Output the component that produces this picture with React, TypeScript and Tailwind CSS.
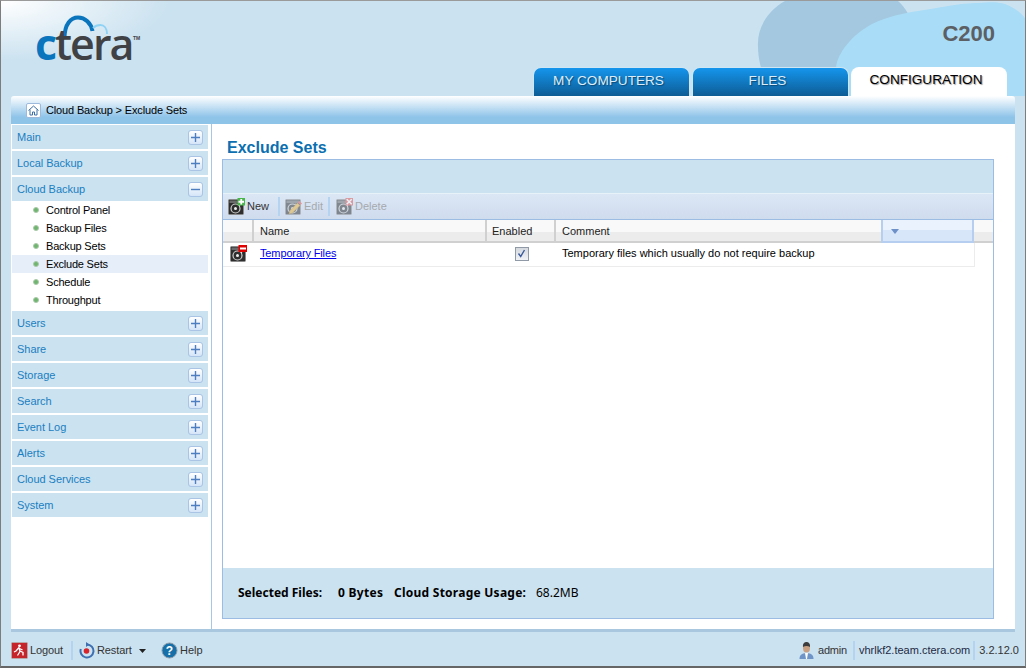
import React from 'react';

const collapsedTop = ['Main', 'Local Backup'];
const cloudItems = ['Control Panel', 'Backup Files', 'Backup Sets', 'Exclude Sets', 'Schedule', 'Throughput'];
const collapsedBottom = ['Users', 'Share', 'Storage', 'Search', 'Event Log', 'Alerts', 'Cloud Services', 'System'];

function ToggleBox({ open }: { open?: boolean }) {
    return (
        <span className="flex h-[15px] w-[15px] items-center justify-center rounded-[3px] border border-[#a9c4e4] bg-[linear-gradient(#ffffff,#d5e5f8)]">
            <svg width="9" height="9" viewBox="0 0 9 9">
                <path d={open ? 'M0 4.5H9' : 'M0 4.5H9M4.5 0V9'} stroke="#4f7ec0" strokeWidth="1.4" />
            </svg>
        </span>
    );
}

function SideHeader({ label, open }: { label: string; open?: boolean }) {
    return (
        <div className="flex h-6 items-center justify-between bg-[#cbe2f0] pl-[5px] pr-[5px] text-[#1a7fc1]">
            <span className="tracking-[-0.03px]">{label}</span>
            <ToggleBox open={open} />
        </div>
    );
}

function DiscIcon({ faded, badge }: { faded?: boolean; badge?: 'plus' | 'edit' | 'cross' | 'minus' }) {
    return (
        <svg width="17" height="17" viewBox="0 0 17 17" className={faded ? 'opacity-50' : ''}>
            <rect x="0.5" y="1.5" width="15" height="15" rx="1" fill="#2e2e2e" stroke="#8a8a8a" />
            <rect x="1.5" y="2.5" width="13" height="2.5" fill="#6a6a6a" />
            <circle cx="7.5" cy="10.5" r="4.5" fill="none" stroke="#cfcfcf" strokeWidth="1.2" />
            <circle cx="7.5" cy="10.5" r="1.5" fill="#eeeeee" />
            <path d="M10 5.5l2.5 1-1 2.5z" fill="#e6e6e6" />
            {badge === 'plus' && (
                <>
                    <rect x="9.5" y="0" width="7.5" height="7.5" fill="#49b649" />
                    <path d="M13.25 1v5.5M10.5 3.75h5.5" stroke="#fff" strokeWidth="1.8" />
                </>
            )}
            {badge === 'cross' && (
                <>
                    <rect x="9.5" y="0" width="7.5" height="7.5" fill="#d9534f" />
                    <path d="M10.7 1.2l5 5M15.7 1.2l-5 5" stroke="#fff" strokeWidth="1.5" />
                </>
            )}
            {badge === 'minus' && (
                <>
                    <rect x="8.5" y="0" width="8.5" height="7" fill="#e00000" />
                    <path d="M10 3.5h6" stroke="#fff" strokeWidth="2" />
                </>
            )}
            {badge === 'edit' && (
                <>
                    <path d="M4 16l1-3.5 7.5-7.5 2.5 2.5-7.5 7.5z" fill="#e8b23a" stroke="#a8791a" strokeWidth="0.5" />
                    <path d="M13 4.5l1.5-1.5 2.5 2.5L15.5 7z" fill="#d9534f" />
                </>
            )}
        </svg>
    );
}

function Sep() {
    return <span className="h-[19px] w-0.5 shrink-0 bg-[#b3d3f0]" />;
}

export default function App() {
    return (
        <div
            className="relative flex h-[668px] w-[1026px] flex-col overflow-hidden border-x border-t border-b-2 border-x-[#7d7d7d] border-t-[#9a9a9a] border-b-[#666666] bg-[#cbe2f0] text-[11px] text-black"
            style={{ fontFamily: '"Liberation Sans", Arial, sans-serif' }}
        >
            {/* Header */}
            <div className="relative flex h-[95px] shrink-0 flex-col justify-end">
                <div className="absolute left-0 top-0 h-[60px] w-[170px] bg-[radial-gradient(ellipse_at_top_left,#ffffff,transparent_70%)]" />
                <svg className="absolute right-0 top-0" width="270" height="95" viewBox="0 0 270 95">
                    <path d="M30 0C12 10 2 28 3 45c0 20 8 35 12 50H100L158 30C158 18 150 6 143 0Z" fill="#a3c8e0" />
                    <path d="M81 95V67C82 52 98 33 117 23C133 15 150 12 163 10C190 6 205 2 223 2C235 1 243 1 250 3C258 6 265 11 270 17V95Z" fill="#a9dcf7" />
                </svg>

                <div className="absolute left-[37px] top-[13px] h-[52px] w-[105px]">
                    <svg className="absolute left-[24px] top-px" width="48" height="24" viewBox="0 0 48 24">
                        <path d="M2.5 23C2.500 9 9 2.500 16 2.500C23 2.500 29 8 30.500 16" fill="none" stroke="#0a74bd" strokeWidth="4" />
                        <path d="M31 13C33 11 36 10 38.500 10C42 10 45 13 45 19" fill="none" stroke="#8fd3f4" strokeWidth="2" />
                    </svg>
                    <span
                        className="absolute -left-[3px] top-[7px] text-[43px] font-semibold leading-[46px] tracking-[-2px] text-[#404144]"
                        style={{ fontFamily: '"Open Sans", sans-serif' }}
                    >
                        <span className="font-bold text-[#0a74bd]">c</span>tera
                    </span>
                    <span className="absolute left-[95px] top-[22px] text-[5px] font-bold leading-none text-[#404144]">TM</span>
                </div>

                <div className="absolute right-[30px] top-5 text-[22px] font-bold leading-[25px] text-[#5c5f63]">C200</div>

                <div className="relative flex justify-end gap-0.5 pr-[18px]">
                    <div className="flex h-[29px] w-[157px] items-center justify-center rounded-t-[8px] border border-b-0 border-[#cfe6f5] bg-[linear-gradient(#1595ec,#0d5c95)] pb-0.5 pr-[6px] text-[13.6px] text-[#dcedf8] [text-shadow:1px_1px_1px_#0b4a78]">MY COMPUTERS</div>
                    <div className="flex h-[29px] w-[157px] items-center justify-center rounded-t-[8px] border border-b-0 border-[#cfe6f5] bg-[linear-gradient(#1595ec,#0d5c95)] pb-0.5 pr-[6px] text-[13.6px] text-[#dcedf8] [text-shadow:1px_1px_1px_#0b4a78]">FILES</div>
                    <div className="flex h-[29px] w-[156px] items-center justify-center rounded-t-[8px] bg-white pb-0.5 pr-[6px] text-[13.6px] text-black [text-shadow:1px_1px_1px_#999999]">CONFIGURATION</div>
                </div>
            </div>

            {/* Main */}
            <div className="flex min-h-0 flex-1 flex-col pl-[10px] pr-[10px]">
                <div className="flex h-[28px] shrink-0 items-center gap-[5px] rounded-t-[3px] bg-[linear-gradient(#ffffff,#8fc4e9_75%)] pl-[15px]">
                    <span className="flex h-[15px] w-[15px] items-center justify-center rounded-[2px] border border-[#9db9dc] bg-white">
                        <svg width="11" height="11" viewBox="0 0 11 11">
                            <path d="M0.5 5.5L5.5 1l5 4.5M2 4.5V10h2.5V7h2v3H9V4.5" fill="none" stroke="#3d6ea5" />
                        </svg>
                    </span>
                    <span className="tracking-[-0.15px]">Cloud Backup &gt; Exclude Sets</span>
                </div>

                <div className="flex min-h-0 flex-1 border-b-[3px] border-[#a9c8df] bg-white">
                    {/* Sidebar */}
                    <div className="flex w-[201px] shrink-0 flex-col gap-0.5 border-r border-[#a8c6e6] pl-px pr-[3px] pt-px">
                        {collapsedTop.map(label => <SideHeader key={label} label={label} />)}
                        <div>
                            <SideHeader label="Cloud Backup" open />
                            {cloudItems.map(item => (
                                <div key={item} className={`flex h-[18px] items-center gap-[7px] pl-[21px] ${item === 'Exclude Sets' ? 'bg-[#e6eef9]' : ''}`}>
                                    <span className="h-[6px] w-[6px] rounded-full border border-[#a9c9a9] bg-[#6fb46f]" />
                                    <span className="tracking-[-0.2px]">{item}</span>
                                </div>
                            ))}
                        </div>
                        {collapsedBottom.map(label => <SideHeader key={label} label={label} />)}
                    </div>

                    {/* Content */}
                    <div className="flex min-w-0 flex-1 flex-col pl-[10px] pr-[21px] pb-[10px]">
                        <h1 className="h-[35px] shrink-0 pl-[5px] pt-[15px] text-[16px] font-bold leading-[18px] text-[#0b6fb0]">Exclude Sets</h1>
                        <div className="flex min-h-0 flex-1 flex-col border border-[#9dbce4]">
                            <div className="h-[33px] shrink-0 bg-[#cbe2f0]" />
                            <div className="flex h-[27px] shrink-0 items-center border-y border-t-[#e6f1f8] border-b-[#9dbce4] bg-[linear-gradient(#dce7f5,#cfdcee)] pl-[5px]">
                                <DiscIcon badge="plus" />
                                <span className="ml-[2px] mr-[7px] w-[24px] text-[#333]">New</span>
                                <Sep />
                                <span className="ml-[5px]"><DiscIcon faded badge="edit" /></span>
                                <span className="ml-[2px] mr-[5px] w-[19px] text-[#a5a9ae]">Edit</span>
                                <Sep />
                                <span className="ml-[6px]"><DiscIcon faded badge="cross" /></span>
                                <span className="ml-[2px] text-[#a5a9ae]">Delete</span>
                            </div>
                            <div className="flex h-[23px] shrink-0 bg-[linear-gradient(#f9f9f9_50%,#ececec_50%)] text-[#222] [&>div]:flex [&>div]:items-center [&>div]:border-b-2 [&>div]:border-[#d0d0d0] [&>div]:pt-0.5">
                                <div className="w-[31px] border-r-2 border-r-[#e0e0e0]" />
                                <div className="w-[233px] border-r-2 border-r-[#e0e0e0] pl-[6px]">Name</div>
                                <div className="w-[69px] border-r-2 border-r-[#e0e0e0] pl-[5px]">Enabled</div>
                                <div className="w-[325px] pl-[6px]">Comment</div>
                                <div className="w-[93px] justify-center bg-[linear-gradient(#eaf2fd_50%,#d8e6fa_50%)] !border-2 !border-t-0 !border-[#b6cef0] pr-[66px]">
                                    <svg width="8" height="5" viewBox="0 0 8 5" className="shrink-0"><path d="M0 0h8L4 5z" fill="#6d90c8" /></svg>
                                </div>
                                <div className="flex-1" />
                            </div>
                            <div className="flex h-[24px] w-[752px] shrink-0 items-center border-b border-r border-[#ececec] pb-0.5">
                                <div className="flex w-[31px] justify-center"><DiscIcon badge="minus" /></div>
                                <div className="w-[233px] pl-[6px]"><a className="tracking-[-0.13px] text-[#0000ee] underline" href="#">Temporary Files</a></div>
                                <div className="flex w-[69px] justify-center">
                                    <span className="flex h-[14px] w-[14px] items-center justify-center border border-[#8f9aa6] bg-[linear-gradient(#d5dae0,#f0f2f5)]">
                                        <svg width="9" height="9" viewBox="0 0 9 9"><path d="M1.5 4.5l2.2 3L7.5 1" fill="none" stroke="#3a5a9a" strokeWidth="1.4" /></svg>
                                    </span>
                                </div>
                                <div className="pl-[6px]">Temporary files which usually do not require backup</div>
                            </div>
                            <div className="flex-1" />
                            <div className="flex h-[50px] shrink-0 items-center whitespace-nowrap bg-[#cbe2f0] pl-[15px] text-[12px]" style={{ fontFamily: '"Noto Sans", sans-serif' }}>
                                <b className="w-[100px]">Selected Files:</b>
                                <b className="w-[56px] tracking-[0.3px]">0 Bytes</b>
                                <b className="w-[142px] tracking-[0.25px]">Cloud Storage Usage:</b>
                                <span>68.2MB</span>
                            </div>
                        </div>
                    </div>
                </div>
            </div>

            {/* Footer */}
            <div className="flex h-[34px] shrink-0 items-center justify-between pl-[10px] pr-[6px] pt-[3px] text-[#333]">
                <div className="flex items-center">
                    <svg width="17" height="17" viewBox="0 0 17 17">
                        <rect x="0.5" y="0.5" width="16" height="16" rx="1" fill="#c4242a" stroke="#b9a7a7" />
                        <circle cx="8.5" cy="3.8" r="1.4" fill="#fff" />
                        <path d="M8 5.5L5 9l-2 1M8 5.5l1 4-2.5 4M9 9l3 1.5v3M8.5 6.5l3 1.5" fill="none" stroke="#fff" strokeWidth="1.3" />
                    </svg>
                    <span className="ml-[2px] mr-[7px] w-[34px] tracking-[-0.1px]">Logout</span>
                    <Sep />
                    <svg className="ml-[5px]" width="17" height="17" viewBox="0 0 17 17">
                        <path d="M9 2.5A6.5 6.5 0 1 1 2.8 7" fill="none" stroke="#3f6fb0" strokeWidth="2" />
                        <path d="M8 0l3.5 2.5L8 5z" fill="#3f6fb0" />
                        <circle cx="8.5" cy="9" r="2.8" fill="#d8232a" />
                    </svg>
                    <span className="ml-[2px] w-[42px] tracking-[-0.1px]">Restart</span>
                    <svg width="7" height="4" viewBox="0 0 7 4"><path d="M0 0h7L3.5 4z" fill="#222" /></svg>
                    <span className="ml-[8px]"><Sep /></span>
                    <svg className="ml-[7px]" width="17" height="17" viewBox="0 0 17 17">
                        <circle cx="8.5" cy="8.5" r="7.5" fill="#156fa8" stroke="#8c9ba8" />
                        <text x="8.5" y="13" textAnchor="middle" fontSize="12" fontWeight="700" fill="#fff" fontFamily="Liberation Sans">?</text>
                    </svg>
                    <span className="ml-[2px]">Help</span>
                </div>
                <div className="flex items-center">
                    <svg width="15" height="17" viewBox="0 0 15 17">
                        <path d="M0.5 17c0-4 2-5.5 7-6 5 .5 7 2 7 6z" fill="#6e94c8" />
                        <path d="M6 11h3l-1 6h-1z" fill="#fff" />
                        <ellipse cx="7.5" cy="6" rx="3.5" ry="4.5" fill="#c99f82" />
                        <path d="M4 5c-.5-4 2-5 3.5-5S11.5 1 11 5C9 3.5 6 3.5 4 5z" fill="#3c3c3c" />
                    </svg>
                    <span className="ml-[4px] mr-[6px] tracking-[-0.2px]">admin</span>
                    <Sep />
                    <span className="ml-[4px] mr-[3px] text-[#1d2a44]">vhrlkf2.team.ctera.com</span>
                    <Sep />
                    <span className="ml-[4px]">3.2.12.0</span>
                </div>
            </div>
        </div>
    );
}
